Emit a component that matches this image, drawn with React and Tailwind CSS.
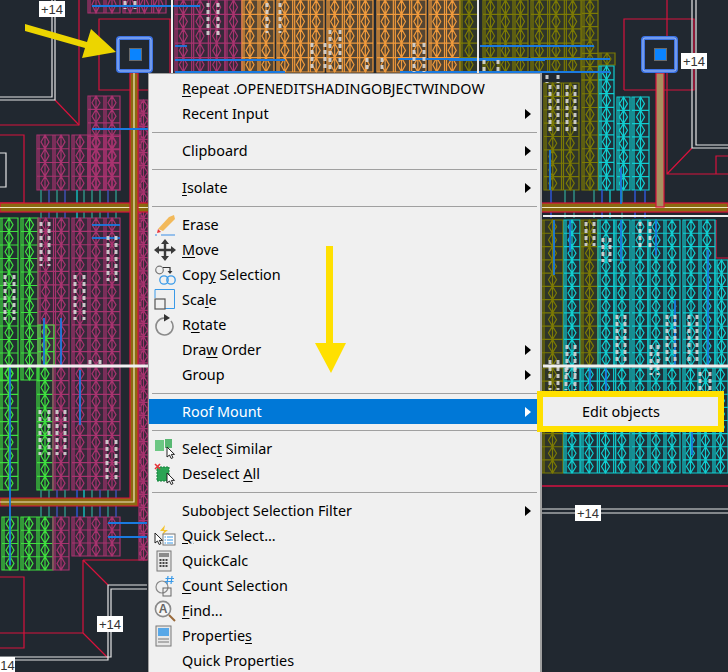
import React from 'react';

const COLORS = {
  pink: { line: '#a8336f', fill: 0.16 },
  orange: { line: '#f09a3c', fill: 0.25 },
  olive: { line: '#7c7a04', fill: 0.16 },
  cyan: { line: '#10cdd0', fill: 0.05 },
  green: { line: '#3fe03f', fill: 0.05 },
};

// x, y, w, h, colour, column width
const BLOCKS = [
  // top row
  [88, -4, 32, 17, 'pink', 16], [123, -4, 43, 17, 'pink', 16],
  [175, 0, 50, 72, 'pink', 16], [225, 0, 17, 72, 'pink', 16],
  [242, 0, 32, 72, 'orange', 16], [277, 0, 47, 72, 'orange', 16], [327, 0, 46, 72, 'orange', 16],
  [377, 0, 49, 72, 'orange', 16], [429, 0, 31, 72, 'orange', 16],
  [460, 0, 18, 72, 'olive', 16], [483, 0, 45, 72, 'olive', 16], [531, 0, 50, 72, 'olive', 16],
  [582, 0, 16, 80, 'olive', 16],
  // top right
  [544, 83, 35, 107, 'olive', 16], [582, 80, 16, 110, 'olive', 16],
  [599, 53, 16, 12, 'olive', 16], [599, 66, 15, 124, 'cyan', 15],
  [617, 97, 13, 93, 'cyan', 13], [632, 97, 17, 93, 'cyan', 17],
  // left of the menu, above the bus
  [88, 96, 32, 94, 'pink', 16], [37, 135, 32, 55, 'pink', 16], [72, 135, 48, 55, 'pink', 16],
  // middle left
  [0, 218, 18, 162, 'green', 18], [21, 218, 17, 162, 'green', 17],
  [38, 218, 31, 147, 'pink', 16], [72, 218, 48, 147, 'pink', 16],
  [38, 325, 16, 40, 'green', 16],
  [139, 100, 9, 460, 'pink', 16],
  // below the white line
  [0, 367, 18, 123, 'green', 18], [37, 367, 16, 123, 'green', 16], [53, 367, 16, 123, 'pink', 16],
  [72, 367, 48, 123, 'pink', 16],
  [2, 517, 16, 53, 'green', 16], [21, 517, 32, 53, 'green', 16],
  [53, 517, 16, 53, 'pink', 16], [72, 517, 48, 39, 'pink', 16],
  // right of the menu
  [542, 220, 21, 146, 'olive', 21], [564, 220, 16, 146, 'cyan', 16], [581, 220, 17, 146, 'olive', 17],
  [598, 220, 16, 146, 'cyan', 16], [614, 220, 16, 146, 'cyan', 16], [632, 220, 16, 146, 'cyan', 16],
  [648, 220, 32, 146, 'cyan', 16], [683, 220, 32, 146, 'cyan', 16], [715, 260, 13, 106, 'cyan', 13],
  [542, 368, 21, 105, 'olive', 21], [564, 368, 16, 105, 'cyan', 16], [581, 368, 49, 105, 'cyan', 16],
  [632, 368, 48, 105, 'cyan', 16], [683, 368, 45, 105, 'cyan', 16],
];

// white annotation columns
const SPECKS = [
  [125, 1, 8], [135, 1, 8], [208, 3, 33], [218, 3, 33], [267, 3, 30], [280, 3, 30], [312, 43, 27], [325, 43, 27],
  [330, 30, 40], [340, 30, 40], [414, 43, 29], [424, 43, 29], [367, 58, 14], [382, 58, 14], [484, 60, 12], [498, 60, 12],
  [547, 75, 8], [558, 75, 8], [550, 85, 48], [558, 85, 48], [567, 85, 48], [575, 85, 48],
  [41, 222, 44], [49, 222, 44], [75, 275, 45], [84, 275, 45], [108, 236, 45], [116, 236, 45],
  [5, 275, 45], [14, 275, 45], [90, 360, 5], [100, 360, 5],
  [40, 410, 45], [49, 410, 45], [57, 410, 45], [65, 410, 45], [107, 440, 42], [116, 440, 42],
  [586, 222, 24], [594, 222, 24], [603, 238, 24], [610, 238, 24],
  [617, 315, 46], [625, 315, 46], [567, 345, 30], [575, 345, 30], [651, 345, 30], [658, 345, 30],
  [667, 315, 46], [675, 315, 46], [689, 315, 46], [697, 315, 46], [640, 222, 28], [650, 222, 28],
  [550, 360, 30], [558, 360, 30], [566, 368, 22], [575, 368, 22], [700, 372, 18], [710, 372, 18],
];

// x1, y1, x2, y2
const BLUE = [
  [92, 6, 200, 6], [175, 46, 187, 46], [175, 60, 285, 60], [175, 72, 285, 72],
  [92, 129, 148, 129], [449, 60, 545, 60], [480, 46, 594, 46], [398, 59, 610, 59], [400, 72, 610, 72],
  [92, 225, 120, 225], [92, 238, 120, 238], [44, 318, 44, 365], [61, 318, 61, 365],
  [10, 367, 10, 565], [80, 370, 80, 425], [108, 523, 147, 523], [108, 537, 147, 537],
  [554, 220, 554, 275], [570, 220, 570, 252], [621, 220, 621, 262],
  [656, 220, 656, 255], [708, 250, 708, 366], [675, 300, 675, 366], [550, 150, 550, 190], [621, 168, 621, 204],
  [590, 368, 590, 392], [606, 368, 606, 392], [692, 432, 692, 455],
];

// small vertical risers between the bus and the blocks
const RISERS = [
  [41, 190, 218, '#2f8f83'], [49, 190, 218, '#3f4fb0'], [57, 190, 218, '#2f8f83'], [65, 190, 218, '#3f4fb0'],
  [77, 190, 218, '#14b8b8'], [84, 190, 218, '#2f8f83'], [92, 190, 218, '#2f8f83'], [100, 190, 218, '#2f8f83'],
  [108, 190, 218, '#3f4fb0'], [116, 190, 218, '#2f8f83'],
  [41, 490, 517, '#2f8f83'], [49, 490, 517, '#2f8f83'], [57, 490, 517, '#3f4fb0'], [65, 490, 517, '#2f8f83'],
  [77, 490, 517, '#2f55d0'], [84, 490, 517, '#14b8b8'], [92, 490, 517, '#2f8f83'], [100, 490, 517, '#3f4fb0'],
  [108, 490, 517, '#2f8f83'], [116, 490, 517, '#3f4fb0'],
  [551, 190, 218, '#2f55d0'], [565, 190, 218, '#2f8f83'], [574, 190, 218, '#2f8f83'], [594, 190, 218, '#2f8f83'],
  [602, 190, 218, '#2f55d0'], [610, 190, 218, '#14b8b8'], [622, 190, 218, '#2f8f83'], [635, 190, 218, '#2f55d0'],
  [645, 190, 218, '#2f55d0'],
];

const blockPath = (x, y, w, h, cw) => {
  const cols = Math.max(1, Math.round(w / cw));
  const cell = w / cols;
  const rows = Math.max(1, Math.round(h / 13.3));
  const rh = h / rows;
  let d = `M${x} ${y}H${x + w}V${y + h}H${x}Z`;
  for (let c = 0; c < cols; c++) {
    const left = x + c * cell;
    const cx = left + cell / 2;
    d += `M${left} ${y}V${y + h}M${left + 2} ${y}V${y + h}M${cx} ${y}V${y + h}`;
    for (let r = 0; r < rows; r++) {
      const top = y + r * rh;
      d += `M${cx} ${top}L${cx - 4} ${top + rh / 2}L${cx} ${top + rh}L${cx + 4} ${top + rh / 2}Z`;
    }
  }
  for (let r = 1; r < rows; r++) d += `M${x} ${y + r * rh}H${x + w}`;
  return d;
};

const Handle = ({ x }) => (
  <g>
    <rect x={x + 2} y="38" width="33" height="33" rx="2" fill="#212830" stroke="#3d74e6" strokeWidth="4" />
    <rect x={x + 2} y="38" width="33" height="33" rx="2" fill="none" stroke="#a6c0f0" strokeWidth="1" />
    <rect x={x + 13.5} y="48.5" width="12" height="12" fill="#0a84ff" stroke="#6b6b6b" strokeWidth="1" />
  </g>
);

const Label = ({ x, y, w = 26, h = 16, text = '+14' }) => (
  <g>
    <rect x={x} y={y} width={w} height={h} fill="#fff" />
    <text x={x + w / 2} y={y + h - 3} textAnchor="middle" fontFamily="Liberation Sans, sans-serif" fontSize="13" fill="#333">{text}</text>
  </g>
);

const Drawing = () => (
  <svg className="absolute inset-0" width="728" height="672" viewBox="0 0 728 672">
    {/* red outlines */}
    <g fill="none" stroke="#d8123c" strokeWidth="1.2">
      <path d="M0 125H79V0" />
      <path d="M55 100L79 125" />
      <path d="M99 19H170V90H99Z" />
      <path d="M0 135H24V203H0" />
      <path d="M83 560H147M83 560V633H0M83 560L108 585M83 633L108 658" />
      <path d="M0 577H24V648H0" />
      <path d="M624 90V19H694V90H624" />
      <path d="M667 0V174H728M692 148L667 174M716 174V156H728" />
      <path d="M716 220V258H728" />
    </g>
    <path d="M540 486H728" stroke="#a8163c" strokeWidth="2" />

    {/* white frames */}
    <g fill="none" stroke="#e6e6e6" strokeWidth="1.2">
      <path d="M0 97H52V0M0 100H55V0" />
      <path d="M0 153H6V187H0" />
      <path d="M147 585H108V660H0M147 589H111V657H0" />
      <path d="M692 0V148H728M696 0V145H728" />
      <path d="M540 509H728M540 513H728" />
    </g>

    {/* panel blocks */}
    {BLOCKS.map(([x, y, w, h, color, cw], i) => (
      <g key={i}>
        <rect x={x} y={y} width={w} height={h} fill={COLORS[color].line} fillOpacity={COLORS[color].fill} />
        <path d={blockPath(x, y, w, h, cw)} fill="none" stroke={COLORS[color].line} strokeWidth="1.2" />
      </g>
    ))}

    {RISERS.map(([x, y1, y2, c], i) => (
      <line key={i} x1={x} y1={y1} x2={x} y2={y2} stroke={c} strokeWidth="1.5" />
    ))}

    {/* cable buses */}
    <rect x="0" y="203" width="728" height="9" fill="#8a6a10" stroke="#d8123c" strokeWidth="1.2" />
    <path d="M0 207.5H728" stroke="#f2e8c0" strokeWidth="1.2" />
    <path d="M0 498H130V73H138V506H0Z" fill="#8a6a10" stroke="#d8123c" strokeWidth="1.2" />
    <path d="M0 502H134V73" fill="none" stroke="#f2e8c0" strokeWidth="1.2" />
    <rect x="656" y="73" width="8" height="134" fill="#a89060" stroke="#d8123c" strokeWidth="1.2" />

    {BLUE.map(([x1, y1, x2, y2], i) => (
      <line key={i} x1={x1} y1={y1} x2={x2} y2={y2} stroke="#1a7ae0" strokeWidth="1.8" />
    ))}

    {SPECKS.map(([x, y, h], i) => (
      <line key={i} x1={x} y1={y} x2={x} y2={y + h} stroke="#d8d8d8" strokeWidth="3" strokeDasharray="4 3" strokeOpacity="0.9" />
    ))}

    {/* white divider lines */}
    <path d="M172 0V73" stroke="#f0f0f0" strokeWidth="2" />
    <path d="M478 0V73" stroke="#e8e8e8" strokeWidth="2" />
    <path d="M0 366H148" stroke="#f0f0f0" strokeWidth="3" />
    <path d="M543 366H728" stroke="#f0f0f0" strokeWidth="3" />
    <path d="M543 216H728" stroke="#f0f0f0" strokeWidth="2" />

    <Handle x={116} />
    <Handle x={641} />
    <Label x={39} y={1} />
    <Label x={681} y={53} />
    <Label x={97} y={616} />
    <Label x={575} y={505} />
    <Label x={0} y={657} w={15} text="14" />

    <polygon points="25,24 87,42 91,29 116,52 82,58 85,48 25,31" fill="#ecd500" />
  </svg>
);

// menu icons
const Cursor = ({ x = 0, y = 0 }) => (
  <path transform={`translate(${x} ${y})`} d="M0 0V10L2.5 8L4.2 11.5L6 10.6L4.3 7.4H7.5Z" fill="#fff" stroke="#222" strokeWidth="1" />
);

const Icon = ({ children }) => (
  <svg width="22" height="22" viewBox="0 0 22 22" className="shrink-0">{children}</svg>
);

const ICONS = {
  erase: (
    <Icon>
      <path d="M15 3L20 1L21 5L9 17L4 15Z" fill="#f2b95a" />
      <path d="M4 15L7 18L3 19Z" fill="#e8343a" />
      <path d="M1 21H3M7 21H21" stroke="#3a8ee6" strokeWidth="1" />
    </Icon>
  ),
  move: (
    <Icon>
      <path d="M11 3V19M3 11H19" stroke="#3a3a3a" strokeWidth="2.4" />
      <path d="M11 0L15 5H7ZM11 22L7 17H15ZM0 11L5 7V15ZM22 11L17 15V7Z" fill="#3a3a3a" />
    </Icon>
  ),
  copy: (
    <Icon>
      <circle cx="5.5" cy="6" r="3.8" fill="none" stroke="#7a7a7a" strokeWidth="1.2" />
      <path d="M9 3.5H16V7" fill="none" stroke="#333" strokeWidth="1.2" />
      <path d="M13.5 7H18.5L16 10Z" fill="#333" />
      <circle cx="10" cy="16" r="4.2" fill="none" stroke="#3a9ae8" strokeWidth="1.3" />
      <circle cx="17" cy="16" r="4.2" fill="none" stroke="#3a9ae8" strokeWidth="1.3" />
    </Icon>
  ),
  scale: (
    <Icon>
      <path d="M1 .5H20.5V19.5H11M1 .5V9" fill="none" stroke="#3a9ae8" strokeWidth="1" />
      <rect x="1" y="10" width="10" height="10" fill="none" stroke="#555" strokeWidth="1.2" />
    </Icon>
  ),
  rotate: (
    <Icon>
      <path d="M17 6A8.5 8.5 0 1 1 10 3" fill="none" stroke="#8a8a8a" strokeWidth="1.6" transform="translate(0 1)" />
      <path d="M10 0L16 4L10 7.5Z" fill="#333" />
    </Icon>
  ),
  similar: (
    <Icon>
      <rect x="1" y="2" width="9" height="11" fill="#6cc783" />
      <rect x="11" y="1" width="7" height="9" fill="#58b872" />
      <Cursor x={13} y={9} />
    </Icon>
  ),
  deselect: (
    <Icon>
      <rect x="3" y="4" width="12" height="14" fill="#2aa454" stroke="#14803a" strokeWidth="1" strokeDasharray="2 1" />
      <path d="M1 1L6 6M6 1L1 6" stroke="#e8343a" strokeWidth="1.6" />
      <Cursor x={13} y={10} />
    </Icon>
  ),
  quickSelect: (
    <Icon>
      <path d="M11 0L6 6H10L8 10L14 5H10Z" fill="#f4c430" />
      <rect x="9" y="9" width="12" height="11" fill="#fff" stroke="#777" strokeWidth="1" />
      <path d="M13 12H19M13 15H19M13 18H19M10.5 12H12M10.5 15H12M10.5 18H12" stroke="#3a9ae8" strokeWidth="1" />
      <Cursor x={1} y={8} />
    </Icon>
  ),
  calc: (
    <Icon>
      <rect x="3" y="1" width="14" height="20" fill="#e6e6e6" stroke="#777" strokeWidth="1" />
      <rect x="5" y="3" width="10" height="4" fill="#8a8a8a" />
      <path d="M5.5 10H14.5M5.5 13H14.5M5.5 16H14.5" stroke="#444" strokeWidth="2" strokeDasharray="2 1" />
    </Icon>
  ),
  count: (
    <Icon>
      <circle cx="8" cy="12" r="6" fill="none" stroke="#8a8a8a" strokeWidth="1.2" />
      <rect x="9" y="13" width="8" height="8" fill="none" stroke="#666" strokeWidth="1" />
      <path d="M14 1L13 9M18 1L17 9M11.5 3.5H20M11 6.5H19.5" stroke="#3a9ae8" strokeWidth="1.2" />
    </Icon>
  ),
  find: (
    <Icon>
      <circle cx="9" cy="9" r="7.6" fill="#f6f6f6" stroke="#8a8a8a" strokeWidth="1.6" />
      <text x="9" y="13" textAnchor="middle" fontFamily="Liberation Sans, sans-serif" fontSize="12" fontWeight="700" fill="#666">A</text>
      <path d="M15 15L21 21" stroke="#9a6a3a" strokeWidth="2" />
    </Icon>
  ),
  props: (
    <Icon>
      <rect x="2" y="1" width="15" height="20" fill="#e8e8e8" stroke="#777" strokeWidth="1" />
      <rect x="4" y="3" width="11" height="8" fill="#58a8e8" />
      <path d="M4 14H15M4 17H15" stroke="#777" strokeWidth="1.2" />
    </Icon>
  ),
};

const Sep = () => (
  <div className="h-[12px] flex items-center px-[3px]">
    <div className="h-[1px] w-full bg-[#a0a0a0]" />
  </div>
);

const Row = ({ icon, sub, active, children }) => (
  <div className={`h-[25px] flex items-center ${active ? 'bg-[#0078d7] text-white' : 'text-black'}`}>
    <div className="w-[33px] pl-[5px] flex items-center shrink-0">{icon && ICONS[icon]}</div>
    <div className="flex-1 whitespace-nowrap">{children}</div>
    {sub && (
      <svg width="6" height="10" viewBox="0 0 6 10" className="mr-[9px]">
        <path d="M0 0L6 5L0 10Z" fill={active ? '#fff' : '#000'} />
      </svg>
    )}
  </div>
);

const U = ({ children }) => <span className="underline underline-offset-2">{children}</span>;

const Menu = () => (
  <div className="absolute left-[148px] top-[73px] w-[394px] h-[600px] overflow-hidden bg-[#f0f0f0] border border-[#a0a0a0] border-r-2 pt-[2px] font-['Noto_Sans',sans-serif] text-[14.4px] shadow-md">
    <Row><U>R</U>epeat .OPENEDITSHADINGOBJECTWINDOW</Row>
    <Row sub>Recent Input</Row>
    <Sep />
    <Row sub>Clipboard</Row>
    <Sep />
    <Row sub><U>I</U>solate</Row>
    <Sep />
    <Row icon="erase">Erase</Row>
    <Row icon="move"><U>M</U>ove</Row>
    <Row icon="copy">Cop<U>y</U> Selection</Row>
    <Row icon="scale">Sca<U>l</U>e</Row>
    <Row icon="rotate">R<U>o</U>tate</Row>
    <Row sub>Dra<U>w</U> Order</Row>
    <Row sub>Group</Row>
    <Sep />
    <Row sub active>Roof Mount</Row>
    <Sep />
    <Row icon="similar">Selec<U>t</U> Similar</Row>
    <Row icon="deselect">Deselect <U>A</U>ll</Row>
    <Sep />
    <Row sub>Subobject Selection Filter</Row>
    <Row icon="quickSelect"><U>Q</U>uick Select...</Row>
    <Row icon="calc">QuickCalc</Row>
    <Row icon="count"><U>C</U>ount Selection</Row>
    <Row icon="find"><U>F</U>ind...</Row>
    <Row icon="props">Propertie<U>s</U></Row>
    <Row>Quick Properties</Row>
  </div>
);

const App = () => (
  <div className="relative w-[728px] h-[672px] overflow-hidden bg-[#212830]">
    <Drawing />
    <Menu />
    {/* submenu with its yellow highlight */}
    <div className="absolute left-[537px] top-[391px] w-[187px] h-[41px] border-[6px] border-[#ffe000] bg-[#eeeeee] flex items-center pl-[39px] font-['Noto_Sans',sans-serif] text-[14.4px] text-black">
      Edit objects
    </div>
    <svg className="absolute left-[315px] top-[246px]" width="31" height="128" viewBox="0 0 31 128">
      <polygon points="11,0 18,0 18,97 31,97 16,127 0,97 11,97" fill="#ffe000" />
    </svg>
  </div>
);

export default App;
